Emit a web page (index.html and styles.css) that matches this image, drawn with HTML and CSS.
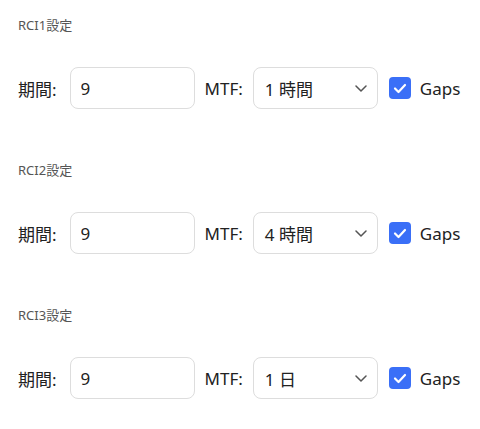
FILE: index.html
```html
<!DOCTYPE html>
<html lang="ja">
<head>
  <meta charset="UTF-8" />
  <meta name="viewport" content="width=device-width, initial-scale=1" />
  <title>RCI設定</title>
  <link rel="stylesheet" href="styles.css">
</head>
<body>

<div class="panel">
  <section class="group">
    <h3>RCI1設定</h3>
    <div class="row">
      <label class="period">期間:</label>
      <input type="text" class="field" value="9" />
      <label>MTF:</label>
      <div class="select">
        <span>1 時間</span>
        <svg width="12" height="7" viewBox="0 0 12 7"><path d="M1 1l5 5 5-5" fill="none" stroke="#555" stroke-width="1.5" stroke-linecap="round" stroke-linejoin="round"/></svg>
      </div>
      <span class="check">
        <svg width="14" height="11" viewBox="0 0 14 11"><path d="M2 5.5l3.5 3.5 6.5-7" fill="none" stroke="#fff" stroke-width="2.2" stroke-linecap="round" stroke-linejoin="round"/></svg>
      </span>
      <span class="gaps">Gaps</span>
    </div>
  </section>

  <section class="group">
    <h3>RCI2設定</h3>
    <div class="row">
      <label class="period">期間:</label>
      <input type="text" class="field" value="9" />
      <label>MTF:</label>
      <div class="select">
        <span>4 時間</span>
        <svg width="12" height="7" viewBox="0 0 12 7"><path d="M1 1l5 5 5-5" fill="none" stroke="#555" stroke-width="1.5" stroke-linecap="round" stroke-linejoin="round"/></svg>
      </div>
      <span class="check">
        <svg width="14" height="11" viewBox="0 0 14 11"><path d="M2 5.5l3.5 3.5 6.5-7" fill="none" stroke="#fff" stroke-width="2.2" stroke-linecap="round" stroke-linejoin="round"/></svg>
      </span>
      <span class="gaps">Gaps</span>
    </div>
  </section>

  <section class="group">
    <h3>RCI3設定</h3>
    <div class="row">
      <label class="period">期間:</label>
      <input type="text" class="field" value="9" />
      <label>MTF:</label>
      <div class="select">
        <span>1 日</span>
        <svg width="12" height="7" viewBox="0 0 12 7"><path d="M1 1l5 5 5-5" fill="none" stroke="#555" stroke-width="1.5" stroke-linecap="round" stroke-linejoin="round"/></svg>
      </div>
      <span class="check">
        <svg width="14" height="11" viewBox="0 0 14 11"><path d="M2 5.5l3.5 3.5 6.5-7" fill="none" stroke="#fff" stroke-width="2.2" stroke-linecap="round" stroke-linejoin="round"/></svg>
      </span>
      <span class="gaps">Gaps</span>
    </div>
  </section>
</div>

</body>
</html>
```

FILE: styles.css
```css
* {
  box-sizing: border-box;
}
body {
  font-family: "Noto Sans", "Noto Sans CJK JP", sans-serif;
  background: #fff;
  color: #222;
  margin: 0;
  padding: 0 18px;
}
.group {
  height: 145px;
  padding-top: 16px;
}
h3 {
  margin: 0;
  font-size: 13px;
  font-weight: normal;
  color: #555;
  line-height: 18px;
}
.row {
  display: flex;
  align-items: center;
  margin-top: 33px;
  height: 42px;
}
label {
  font-size: 17px;
  margin-right: 10px;
}
label.period {
  margin-right: 13px;
}
.field {
  width: 125px;
  height: 42px;
  padding: 0 10px;
  border: 1px solid #ddd;
  border-radius: 8px;
  font: inherit;
  font-size: 17px;
  color: #222;
  margin-right: 10px;
}
.select {
  width: 125px;
  height: 42px;
  padding: 0 10px 0 11px;
  border: 1px solid #ddd;
  border-radius: 8px;
  display: flex;
  align-items: center;
  justify-content: space-between;
  font-size: 17px;
  margin-right: 11px;
}
.check {
  width: 22px;
  height: 22px;
  border-radius: 4px;
  background: #3a6ff7;
  display: flex;
  align-items: center;
  justify-content: center;
  margin-right: 9px;
}
.gaps {
  font-size: 17px;
}
```
